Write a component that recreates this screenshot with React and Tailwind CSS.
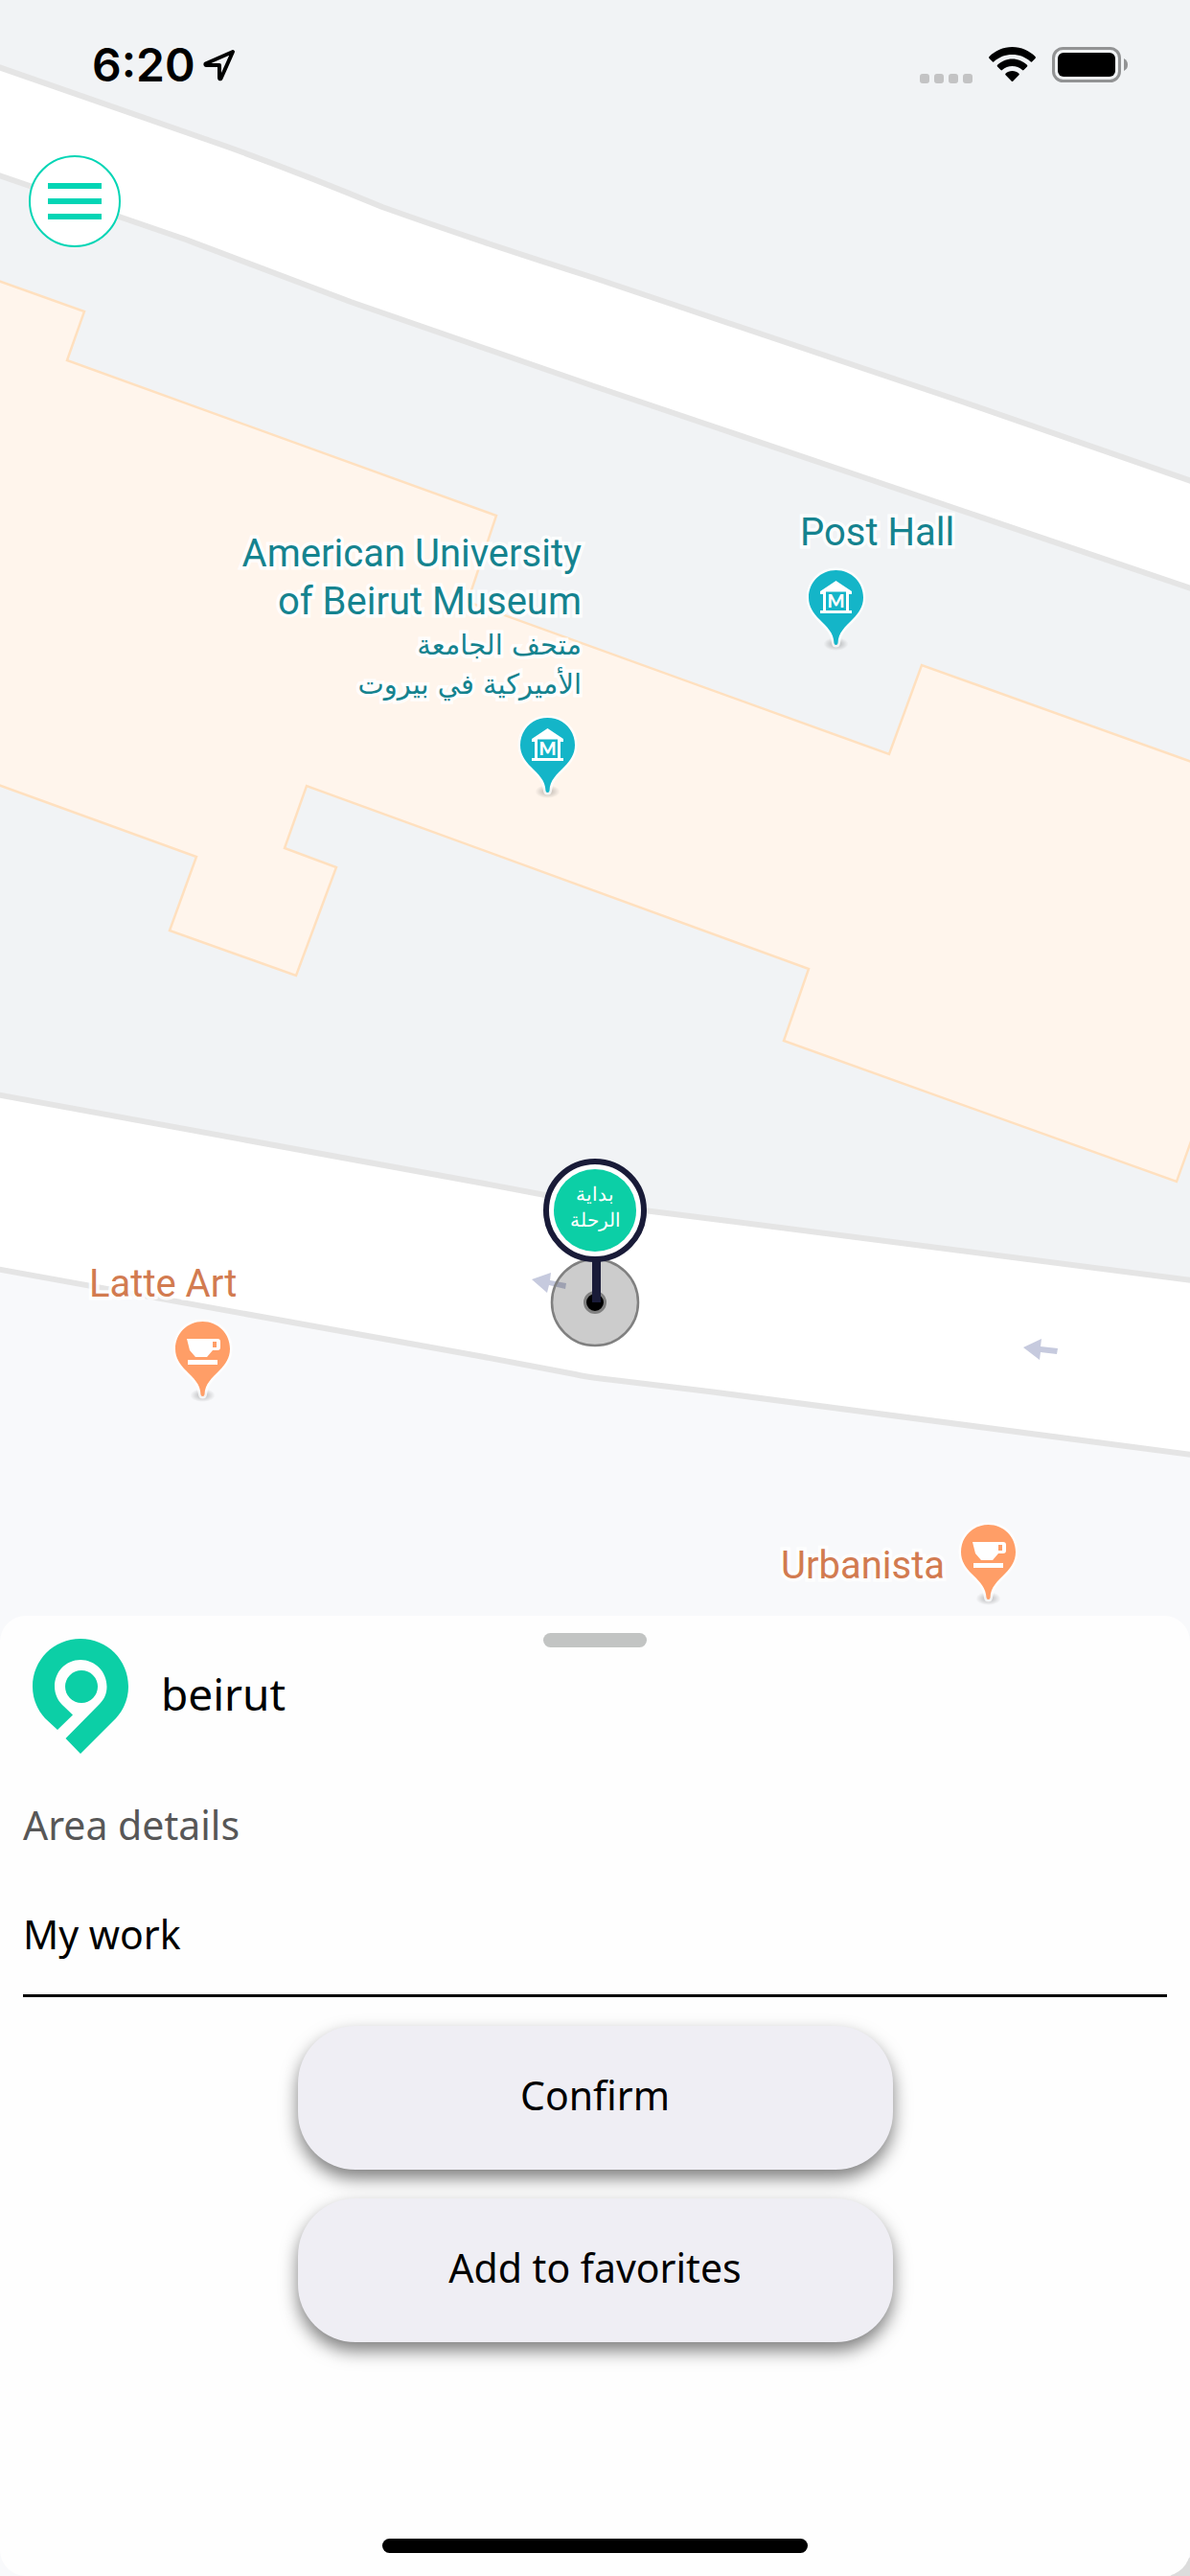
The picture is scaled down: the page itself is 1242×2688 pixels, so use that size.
import React from "react";

const halo = "[-webkit-text-stroke:7px_rgba(255,255,255,0.85)] [paint-order:stroke_fill]";

function MapCanvas() {
  return (
    <svg
      className="absolute inset-0 h-full w-full"
      viewBox="0 0 1242 2688"
      preserveAspectRatio="xMidYMin slice"
      aria-hidden="true"
    >
      <rect width="1242" height="2688" fill="#f1f3f5" />
      <path d="M0 1325 L400 1397 L500 1415 L600 1434 Q612 1437 640 1440 L1242 1518 V2688 H0 Z" fill="#f8f9fb" />
      <g stroke="#e5e5e5" strokeWidth="6" fill="#fff">
        <path d="M-10 67 L237 153 Q320 183 399 216 Q500 252 620 290 L1001 418 L1252 505 V617 L907 500 L620 403 L366 315 L194 250 L-10 180 Z" />
        <path d="M-10 1141 L500 1234 L590 1251 Q620 1257 680 1264 L760 1274 L1252 1337 V1519 L740 1452 L640 1440 Q612 1437 600 1434 L500 1415 L-10 1323 Z" />
      </g>
      <path
        d="M-10 290 L88 325 L70 376 L518 538 L488 628 L928 787 L962 694 L1252 798 V1166 L1228 1233 L818 1086 L844 1011 L320 820 L297 885 L351 905 L309 1018 L177 971 L205 894 L-10 816 Z"
        fill="#fff5ec"
        stroke="#ffe0bf"
        strokeWidth="2.5"
      />
      <g fill="#c6cade">
        <path d="M555 1335 L575 1328 L574 1336 L591 1339 L590 1345 L573 1341 L571 1349 Z" />
        <path d="M1068 1406 L1087 1397 L1086 1405 L1104 1407 L1103 1413 L1086 1411 L1085 1419 Z" />
      </g>
      <path d="M1200 2720 L1262 2660" stroke="#dcdcdc" strokeWidth="16" />
    </svg>
  );
}

function Pin({ kind }) {
  const fill = kind === "museum" ? "#14b5c8" : "#ff9e67";
  return (
    <svg width="69" height="94" viewBox="0 0 69 94" aria-hidden="true">
      <defs>
        <radialGradient id={"ground-" + kind}>
          <stop offset="0" stopColor="#000" stopOpacity="0.28" />
          <stop offset="1" stopColor="#000" stopOpacity="0" />
        </radialGradient>
      </defs>
      <ellipse cx="34.500" cy="83" rx="13" ry="7" fill={"url(#ground-" + kind + ")"} />
      <path
        d="M34.500 6 C18.500 6 6 18.500 6 34.500 C6 44 11 51 17 57 C25 65 32 71 32.500 82 Q32.700 84 34.500 84 Q36.300 84 36.500 82 C37 71 44 65 52 57 C58 51 63 44 63 34.500 C63 18.500 50.500 6 34.500 6 Z"
        fill={fill}
        stroke="#fff"
        strokeOpacity="0.8"
        strokeWidth="5"
        paintOrder="stroke"
      />
      {kind === "museum" ? (
        <g fill="#fff">
          <path d="M34.500 17 L51 28 V31 H48 V48 H51 V51 H18 V48 H21 V31 H18 V28 Z M24 28.500 V48 H45 V28.500 Z" fillRule="evenodd" />
          <text x="34.500" y="45" textAnchor="middle" fontSize="19" fontWeight="900" fontFamily="Lato, sans-serif" className="[-webkit-text-stroke:0px]">M</text>
        </g>
      ) : (
        <g fill="#fff">
          <path
            d="M18 24 H50 Q53 24 53 27 V33 Q53 36 50 36 H45 L39 43 H27 L21 36 Z M45 27 V33 H49 V27 Z"
            fillRule="evenodd"
          />
          <path d="M19 46 H50 V51 H19 Z" />
        </g>
      )}
    </svg>
  );
}

function StartMarker() {
  return (
    <div className="absolute left-1/2 top-[1208px] w-[110px] -translate-x-1/2">
      <svg className="block w-full" viewBox="0 0 110 200" aria-hidden="true">
        <circle cx="55" cy="151" r="45" fill="#000" fillOpacity="0.2" stroke="#808080" strokeWidth="2.500" />
        <circle cx="55" cy="151" r="10.500" fill="#000" stroke="#808080" strokeWidth="3" />
        <rect x="52" y="105" width="9" height="46" fill="#191b38" />
        <circle cx="55" cy="55" r="51" fill="#fff" stroke="#191b38" strokeWidth="6" />
        <circle cx="55" cy="55" r="43" fill="#0ccfa6" />
      </svg>
      <p dir="rtl" className="absolute inset-x-0 top-[25px] text-center font-['DejaVu_Sans',sans-serif] text-[20px] leading-[27px] font-extralight text-white">
        بداية
        <br />
        الرحلة
      </p>
    </div>
  );
}

function StatusBar() {
  return (
    <header className="relative flex h-[110px] items-center justify-between pt-[26px] pr-[64px] pb-0 pl-[96px]">
      <div className="flex items-center gap-[8px]">
        <time className="text-[48px] leading-[60px] font-semibold text-black">6:20</time>
        <svg width="34" height="34" viewBox="0 0 34 34" aria-hidden="true">
          <path d="M31 3 L2.500 15.500 Q2 17 3.500 17 H17 V30 Q17 32 18.500 31 Z" fill="none" stroke="#000" strokeWidth="4" strokeLinejoin="round" />
        </svg>
      </div>
      <div className="flex items-end gap-[17px]">
        <div className="flex gap-[5px]">
          <span className="size-[10px] rounded-[3px] bg-[#c3c3c4]" />
          <span className="size-[10px] rounded-[3px] bg-[#c3c3c4]" />
          <span className="size-[10px] rounded-[3px] bg-[#c3c3c4]" />
          <span className="size-[10px] rounded-[3px] bg-[#c3c3c4]" />
        </div>
        <svg width="49" height="38" viewBox="0 0 49 38" aria-hidden="true">
          <path d="M24.500 0 C34 0 42.500 4 48.500 10 Q49.300 11 48.500 12 L45 15.500 Q44.300 16 43.500 15.300 C38.500 10.500 31.800 8 24.500 8 C17.200 8 10.500 10.500 5.500 15.300 Q4.700 16 4 15.500 L0.500 12 Q-0.300 11 0.500 10 C6.500 4 15 0 24.500 0 Z" />
          <path d="M24.500 12.500 C30.500 12.500 36 15 40 18.800 Q40.800 19.700 40 20.500 L36.500 24 Q35.700 24.800 35 24 C32 21.500 28.500 20 24.500 20 C20.500 20 17 21.500 14 24 Q13.300 24.800 12.500 24 L9 20.500 Q8.200 19.700 9 18.800 C13 15 18.500 12.500 24.500 12.500 Z" />
          <path d="M24.500 25 C27.200 25 29.600 26 31.500 27.700 Q32.200 28.500 31.500 29.200 L25.200 35.700 Q24.500 36.400 23.800 35.700 L17.500 29.200 Q16.800 28.500 17.500 27.700 C19.400 26 21.800 25 24.500 25 Z" />
        </svg>
        <svg width="80" height="38" viewBox="0 0 80 38" aria-hidden="true">
          <rect x="1.500" y="1.500" width="69" height="34" rx="10" fill="none" stroke="#929394" strokeWidth="3" />
          <rect x="6" y="6" width="60" height="25" rx="6" />
          <path d="M75 12 Q79 14 79 18.500 Q79 23 75 25 Z" fill="#929394" />
        </svg>
      </div>
    </header>
  );
}

function BrandPin() {
  return (
    <svg width="100" height="120" viewBox="0 0 100 120" aria-hidden="true">
      <path
        d="M50 0 C22 0 0 22 0 50 C0 63 5 74 13 83 L26 95 L42 79.500 L31 69 C26 64 23 57 23 50 C23 34 35 22 50 22 C65 22 77.500 34 77.500 50 C77.500 57 75 63 70 68 L34.500 104 L50 120 L87 83 C95 74 100 63 100 50 C100 22 78 0 50 0 Z"
        fill="#0ccfa6"
      />
      <circle cx="51" cy="50" r="17" fill="#0ccfa6" />
    </svg>
  );
}

function ActionButton({ children }) {
  return (
    <button
      type="button"
      className="h-[150px] w-1/2 rounded-[60px] bg-[#efeef4] pb-1 text-[41px] text-black shadow-[0_9px_18px_rgba(0,0,0,0.5)]"
    >
      {children}
    </button>
  );
}

export default function App() {
  return (
    <main className="relative flex min-h-screen flex-col overflow-hidden font-['Inter',sans-serif]">
      <MapCanvas />

      <div className="absolute inset-x-0 top-0 font-['Roboto',sans-serif] text-[40px] leading-[50px]">
        <div className={"absolute top-[553px] left-[206px] w-[401px] text-right text-[#15838f] " + halo}>
          <p>
            American University
            <br />
            of Beirut Museum
          </p>
          <p dir="rtl" className="text-start font-['DejaVu_Sans',sans-serif] text-[29px] leading-[41px]">
            متحف الجامعة
            <br />
            الأميركية في بيروت
          </p>
        </div>
        <div className="absolute top-[743px] left-[537px]"><Pin kind="museum" /></div>

        <p className={"absolute top-[531px] left-[835px] whitespace-nowrap text-[#15838f] " + halo}>Post Hall</p>
        <div className="absolute top-[589px] left-[838px]"><Pin kind="museum" /></div>

        <p className={"absolute top-[1315px] left-[93px] whitespace-nowrap text-[#d27b50] " + halo}>Latte Art</p>
        <div className="absolute top-[1373px] left-[177px]"><Pin kind="cafe" /></div>

        <p className={"absolute top-[1609px] left-[815px] whitespace-nowrap text-[#d27b50] " + halo}>Urbanista</p>
        <div className="absolute top-[1585px] left-[997px]"><Pin kind="cafe" /></div>

        <StartMarker />
      </div>

      <StatusBar />
      <button
        type="button"
        aria-label="Open menu"
        className="relative mt-[52px] ml-[30px] flex size-[96px] flex-col items-center justify-center gap-[10px] rounded-full border-2 border-[#03d5b5] bg-white"
      >
        <span className="h-[6px] w-[56px] bg-[#03d5b5]" />
        <span className="h-[6px] w-[56px] bg-[#03d5b5]" />
        <span className="h-[6px] w-[56px] bg-[#03d5b5]" />
      </button>

      <div className="flex-1" />

      <section className="relative rounded-[27px] bg-[#fefefe] px-6 pt-[18px] pb-6 font-['Noto_Sans',sans-serif]">
        <div className="mx-auto h-[15px] w-[108px] rounded-full bg-[#c2c4c3]" />
        <div className="-mt-[9px] flex items-center gap-[34px] pl-[10px]">
          <BrandPin />
          <h1 className="pb-[6px] text-[46px] leading-[60px] text-black">beirut</h1>
        </div>
        <label htmlFor="area" className="mt-[44px] block text-[41px] leading-[60px] text-[#575757]">
          Area details
        </label>
        <input
          id="area"
          type="text"
          defaultValue="My work"
          className="mt-[20px] block h-[130px] w-full border-b-[3px] border-black bg-transparent text-[41px] text-black outline-none"
        />
        <div className="-mx-6 mt-[30px] flex flex-col items-center gap-[30px]">
          <ActionButton>Confirm</ActionButton>
          <ActionButton>Add to favorites</ActionButton>
        </div>
        <div className="mx-auto mt-[205px] h-[15px] w-[444px] rounded-full bg-black" />
      </section>
    </main>
  );
}
